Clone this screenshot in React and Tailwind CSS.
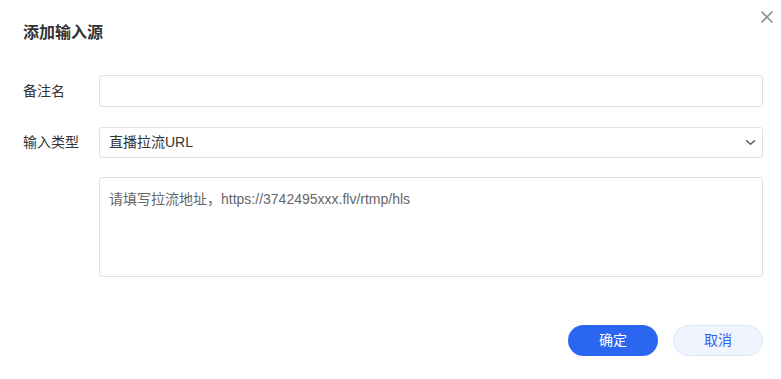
import { useState } from 'react';

const font = { fontFamily: '"Liberation Sans", "Noto Sans CJK SC", sans-serif' };

function App() {
  const [remark, setRemark] = useState('');
  const [type, setType] = useState('pull');
  const [url, setUrl] = useState('');

  return (
    <div className="relative w-[781px] h-[379px] bg-white text-[#333]" style={font}>
      {/* 关闭按钮 */}
      <button className="absolute right-[7px] top-[10px] w-[14px] h-[14px] text-[#8c8c8c]">
        <svg viewBox="0 0 14 14" className="w-[14px] h-[14px]" fill="none" stroke="currentColor" strokeWidth="1.6">
          <path d="M1.5 1.5 L12.5 12.5 M12.5 1.5 L1.5 12.5" />
        </svg>
      </button>

      <div className="pl-[23px] pr-[18px] pt-[23px]">
        <h2 className="text-[16px] leading-[20px] font-bold text-[#333]">添加输入源</h2>

        <div className="mt-[32px]">
          <div className="flex items-center mb-[20px]">
            <label className="w-[76px] shrink-0 text-[14px] text-[#333]">备注名</label>
            <input
              value={remark}
              onChange={(e) => setRemark(e.target.value)}
              className="flex-1 h-[32px] border border-[#dcdfe6] rounded-[3px] px-[10px] text-[14px] outline-none"
            />
          </div>

          <div className="flex items-center mb-[19px]">
            <label className="w-[76px] shrink-0 text-[14px] text-[#333]">输入类型</label>
            <div className="relative flex-1">
              <select
                value={type}
                onChange={(e) => setType(e.target.value)}
                className="w-full h-[31px] border border-[#dcdfe6] rounded-[3px] pl-[9px] pr-[30px] text-[14px] text-[#333] bg-white appearance-none outline-none"
              >
                <option value="pull">直播拉流URL</option>
              </select>
              <svg
                viewBox="0 0 12 8"
                className="absolute right-[7px] top-[12px] w-[11px] h-[7px] text-[#666] pointer-events-none"
                fill="none"
                stroke="currentColor"
                strokeWidth="1.8"
              >
                <path d="M1 1.5 L6 6 L11 1.5" />
              </svg>
            </div>
          </div>

          <div className="flex">
            <div className="w-[76px] shrink-0" />
            <textarea
              value={url}
              onChange={(e) => setUrl(e.target.value)}
              placeholder="请填写拉流地址，https://3742495xxx.flv/rtmp/hls"
              className="flex-1 h-[100px] border border-[#dcdfe6] rounded-[3px] px-[9px] py-[12px] text-[14px] leading-[18px] resize-none outline-none placeholder:text-[#666]"
            />
          </div>
        </div>

        <div className="flex justify-end gap-[15px] mt-[48px]">
          <button className="w-[90px] h-[31px] rounded-full bg-[#2b66f0] text-white text-[14px]">确定</button>
          <button className="w-[90px] h-[31px] rounded-full bg-[#eff4fe] border border-[#dbe6fc] text-[#2b66f0] text-[14px]">取消</button>
        </div>
      </div>
    </div>
  );
}

export default App;
